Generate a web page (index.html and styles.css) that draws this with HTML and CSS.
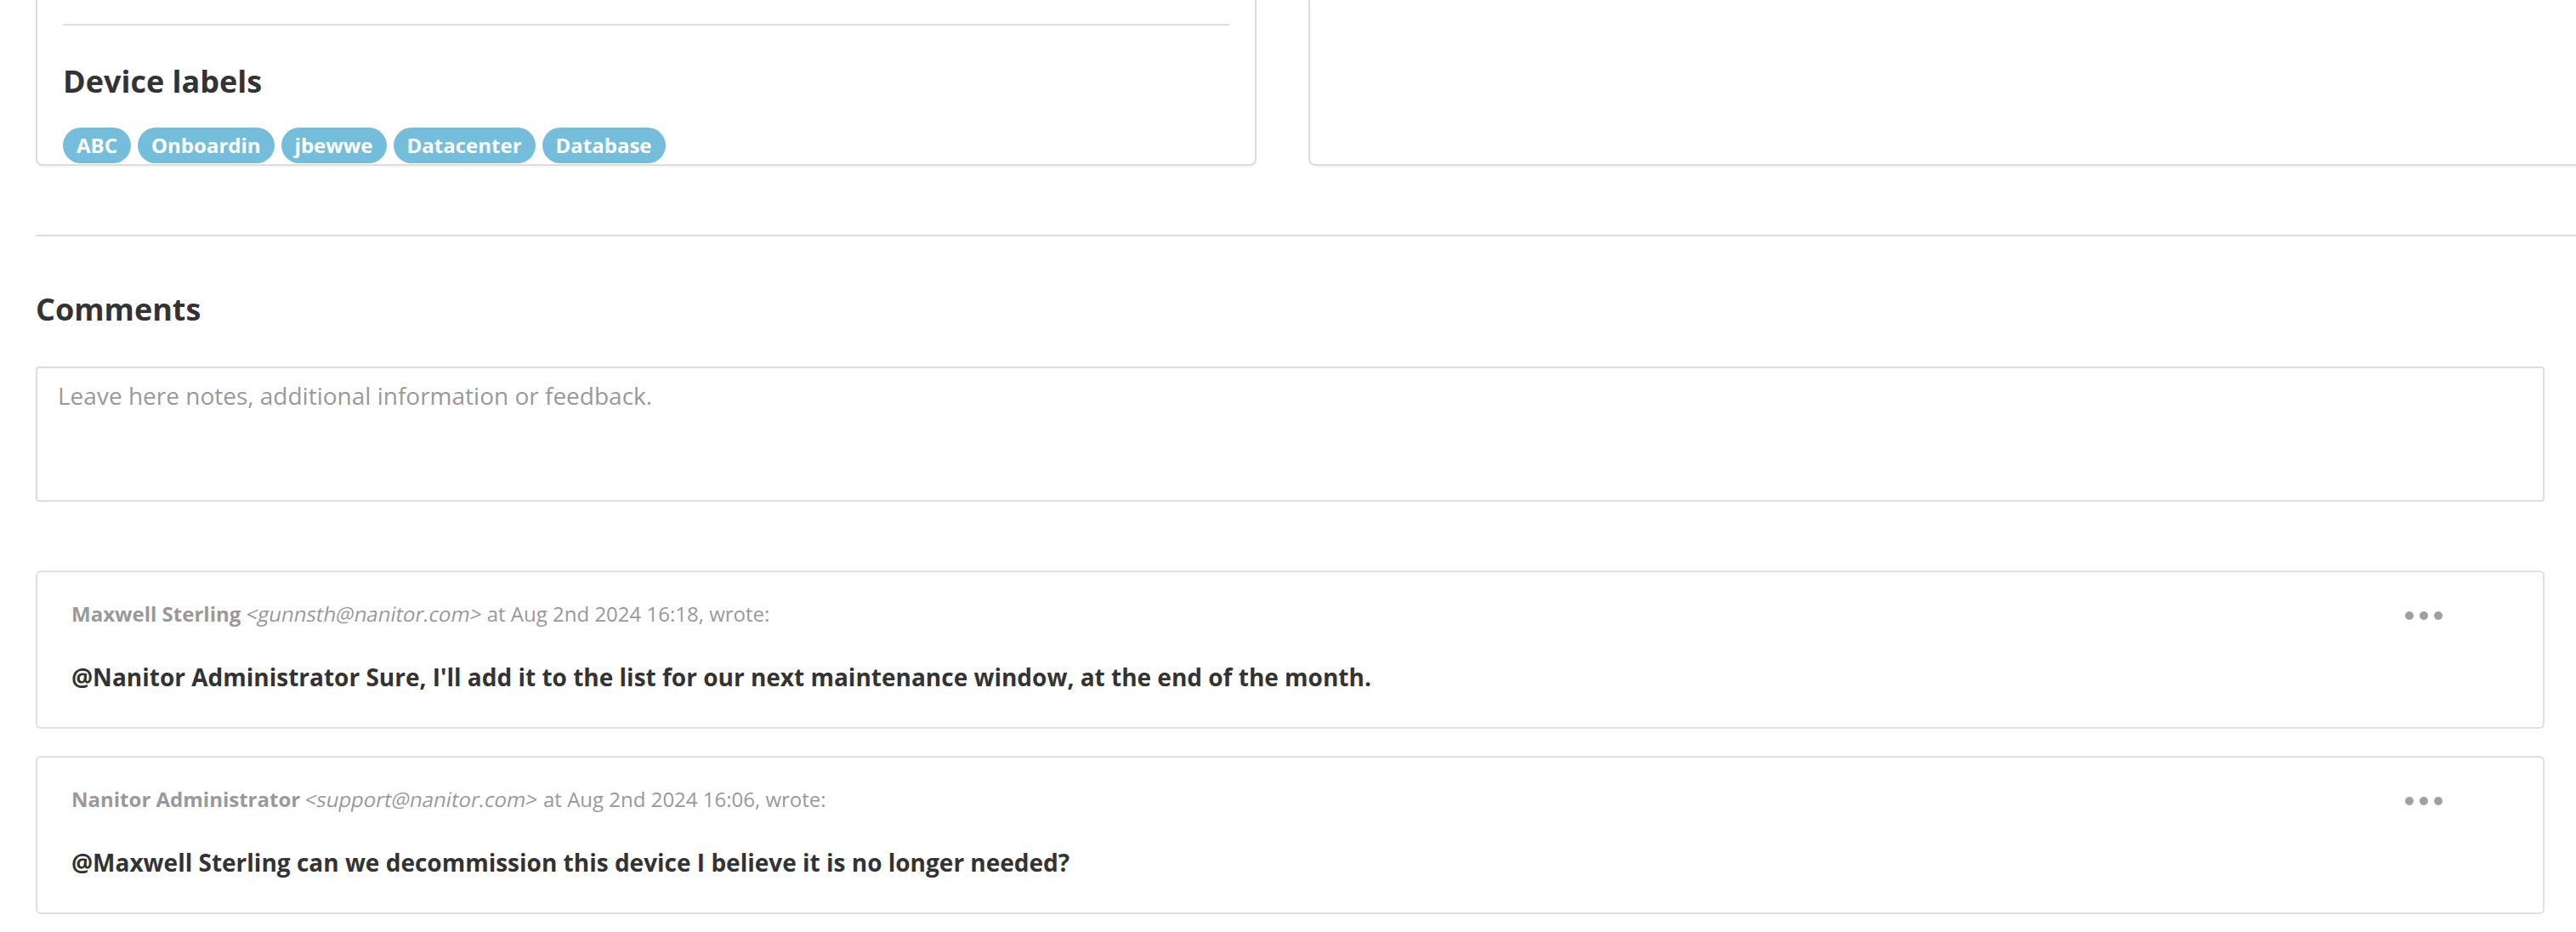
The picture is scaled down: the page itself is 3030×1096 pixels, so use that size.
FILE: index.html
```html
<!DOCTYPE html>
<html lang="en">
<head>
<meta charset="utf-8">
<title>Device – Comments</title>
<link rel="stylesheet" href="styles.css">
</head>
<body>
<div class="page">
  <div class="cards">
    <section class="card card-labels">
      <div class="card-sep"></div>
      <h3 class="card-title">Device labels</h3>
      <div class="labels">
        <span class="label">ABC</span>
        <span class="label">Onboardin</span>
        <span class="label">jbewwe</span>
        <span class="label">Datacenter</span>
        <span class="label">Database</span>
      </div>
    </section>
    <section class="card card-side"></section>
  </div>

  <div class="section-rule"></div>

  <div class="comments-block">
    <h2 class="section-title">Comments</h2>
    <textarea class="comment-input" placeholder="Leave here notes, additional information or feedback."></textarea>

    <div class="comment-list">
      <article class="comment">
        <div class="comment-head">
          <div class="comment-meta"><span class="author">Maxwell Sterling</span> <em class="email">&lt;gunnsth@nanitor.com&gt;</em> at Aug 2nd 2024 16:18, wrote:</div>
          <div class="comment-menu"><span class="dot"></span><span class="dot"></span><span class="dot"></span></div>
        </div>
        <p class="comment-body">@Nanitor Administrator Sure, I'll add it to the list for our next maintenance window, at the end of the month.</p>
      </article>
      <article class="comment">
        <div class="comment-head">
          <div class="comment-meta"><span class="author">Nanitor Administrator</span> <em class="email">&lt;support@nanitor.com&gt;</em> at Aug 2nd 2024 16:06, wrote:</div>
          <div class="comment-menu"><span class="dot"></span><span class="dot"></span><span class="dot"></span></div>
        </div>
        <p class="comment-body">@Maxwell Sterling can we decommission this device I believe it is no longer needed?</p>
      </article>
    </div>
  </div>
</div>
</body>
</html>
```

FILE: styles.css
```css
* {
  box-sizing: border-box;
}

html, body {
  margin: 0;
  padding: 0;
  background: #ffffff;
}

body {
  font-family: "Open Sans", "Noto Sans", sans-serif;
  color: #333333;
  overflow: hidden;
}

.page {
  padding-left: 42px;
  overflow: hidden;
}

.cards {
  display: flex;
  gap: 61px;
  width: 3200px;
}

.card {
  height: 195px;
  border: 2px solid #dddddd;
  border-top: 0;
  border-radius: 0 0 8px 8px;
  box-shadow: 0 2px 2px rgba(0, 0, 0, 0.04);
  overflow: hidden;
  background: #fff;
}

.card-labels {
  flex: 0 0 1436px;
  padding: 0 30px;
}

.card-side {
  flex: 0 0 1600px;
}

.card-sep {
  margin-top: 28px;
  height: 2px;
  background: #dddddd;
}

.card-title {
  margin: 46px 0 0;
  font-size: 36px;
  line-height: 40px;
  font-weight: 700;
  color: #333333;
}

.labels {
  margin-top: 34px;
  display: flex;
  gap: 8px;
}

.label {
  display: inline-block;
  padding: 3px 16px;
  border-radius: 21px;
  background: #75bedb;
  color: #ffffff;
  font-size: 24px;
  line-height: 36px;
  font-weight: 700;
  white-space: nowrap;
}

.section-rule {
  margin-top: 81px;
  height: 2px;
  background: #dddddd;
  width: 3100px;
}

.comments-block {
  margin-right: 37px;
}

.section-title {
  margin: 66px 0 0;
  font-size: 36px;
  line-height: 40px;
  font-weight: 700;
  color: #333333;
}

.comment-input {
  display: block;
  width: 100%;
  height: 159px;
  margin-top: 47px;
  padding: 12px 24px;
  border: 2px solid #dddddd;
  border-radius: 4px;
  font-family: "Open Sans", "Noto Sans", sans-serif;
  font-size: 28px;
  line-height: 40px;
  color: #333333;
  resize: none;
  outline: none;
}

.comment-input::placeholder {
  color: #999999;
}

.comment-list {
  margin-top: 81px;
  display: flex;
  flex-direction: column;
  gap: 32px;
}

.comment {
  height: 186px;
  border: 2px solid #e0e0e0;
  border-radius: 6px;
  padding: 32px 118px 0 40px;
}

.comment-head {
  display: flex;
  justify-content: space-between;
  align-items: flex-start;
}

.comment-meta {
  font-size: 24px;
  line-height: 34px;
  color: #999999;
}

.author {
  font-weight: 700;
}

/* the reference shows a slanted regular face (synthesized italic) */
.email {
  display: inline-block;
  font-style: normal;
  transform: skewX(-11deg);
}

.comment-menu {
  display: flex;
  gap: 7px;
  margin-top: 14px;
}

.dot {
  width: 10px;
  height: 10px;
  border-radius: 50%;
  background: #a0a0a0;
}

.comment-body {
  margin: 37px 0 0;
  font-size: 28px;
  line-height: 40px;
  font-weight: 700;
  color: #333333;
}
```
